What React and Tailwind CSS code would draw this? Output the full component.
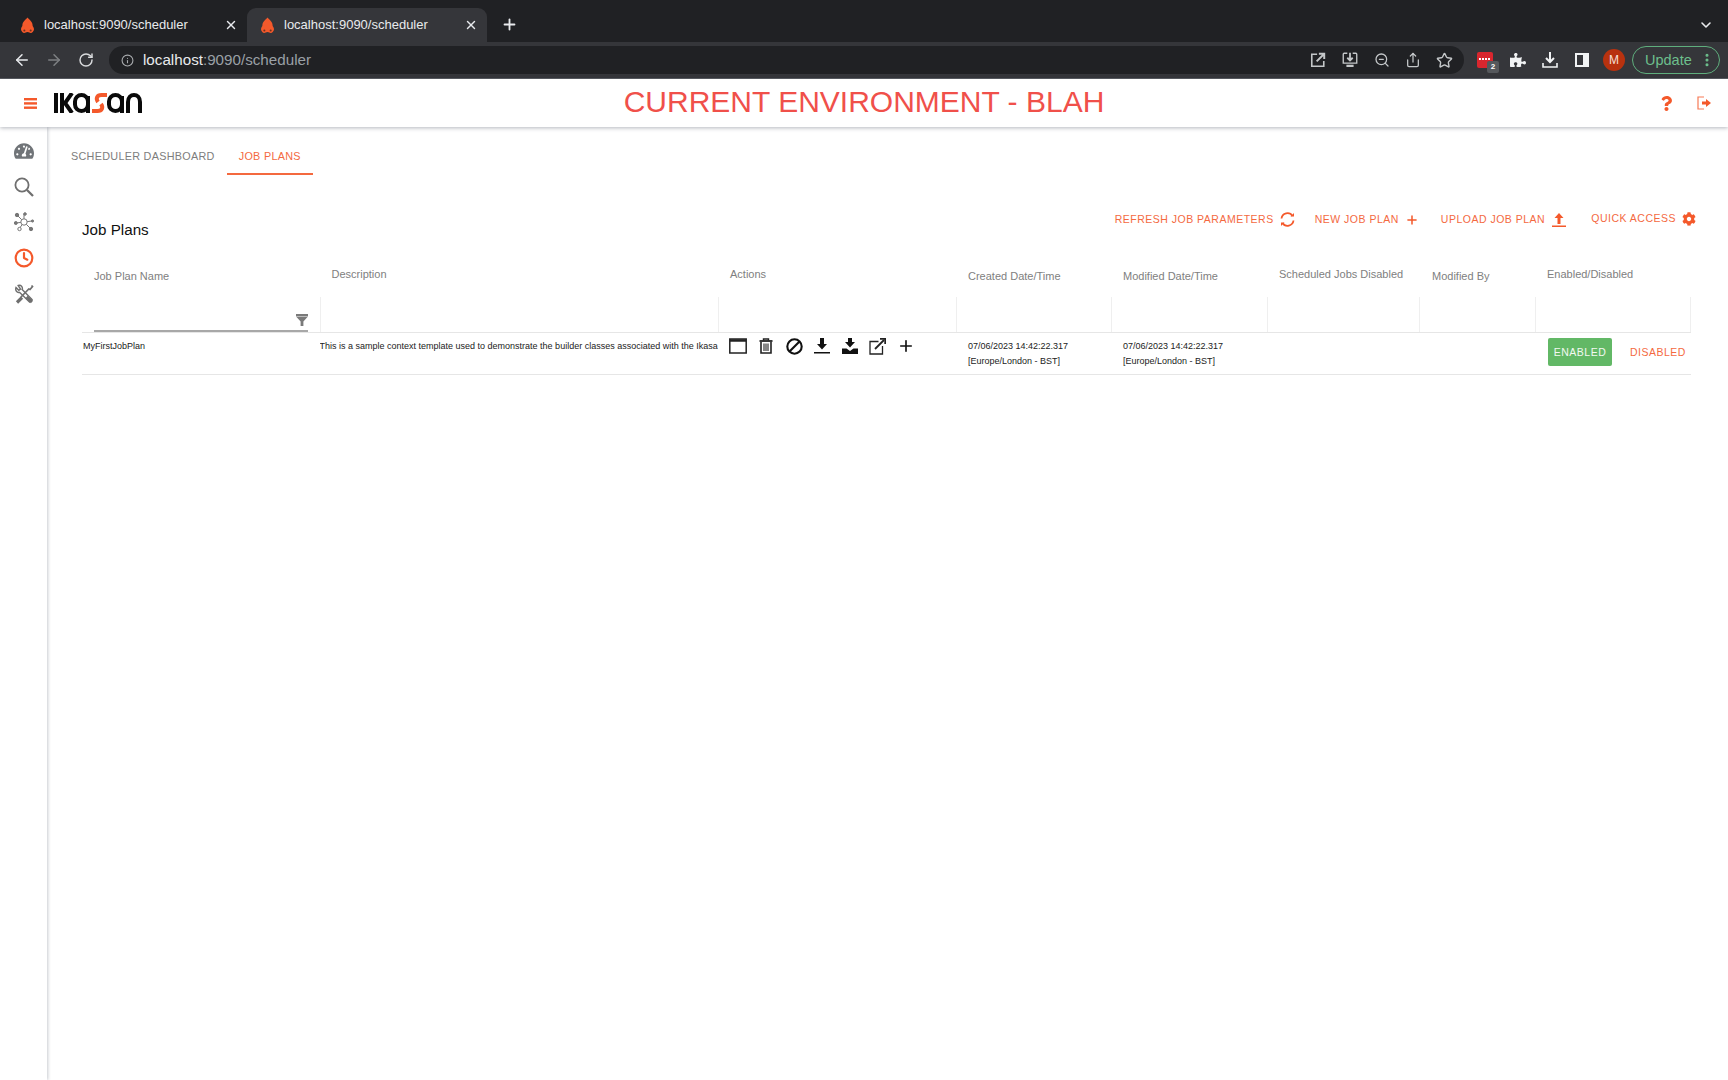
import React from "react";
import { ArrowLeft, ArrowRight, RotateCw, Info, X, Plus, ChevronDown, ZoomOut, Share, Star, Clock, EllipsisVertical } from "lucide-react";
import { FaTachometerAlt, FaCog, FaQuestion, FaPuzzlePiece } from "react-icons/fa";

const ORANGE = "#f4592b";

function Favicon() {
  return (
    <svg width="13" height="17" viewBox="0 0 14 17" className="shrink-0">
      <path d="M7 0 C8.500 2 12.500 4.500 12.500 8.500 C12.500 9.500 14 10.500 14 12.500 C14 14.500 12 16.500 10.500 16.500 C9 16.500 9 15.500 7 15.500 C5 15.500 5 16.500 3.500 16.500 C2 16.500 0 14.500 0 12.500 C0 10.500 1.500 9.500 1.500 8.500 C1.500 4.500 5.500 2 7 0 Z" fill="#f4592b" />
      <circle cx="3.600" cy="13.800" r="1.100" fill="#6a3120" />
      <circle cx="10.400" cy="13.800" r="1.100" fill="#6a3120" />
    </svg>
  );
}

function BrowserTab({ active }) {
  return (
    <div className={"flex h-[34px] w-[240px] items-center rounded-t-[9px] pl-[14px] pr-[9px] " + (active ? "bg-[#35363a]" : "")}>
      <Favicon />
      <span className="ml-[10px] flex-1 text-[13px] text-[#e8eaed]">localhost:9090/scheduler</span>
      <X size={14} strokeWidth={2.4} color="#e8eaed" />
    </div>
  );
}

function InstallIcon() {
  return (
    <svg width="18" height="18" viewBox="0 0 20 20" fill="none" stroke="#c4c7c9" strokeWidth="1.500">
      <path d="M7 2.500H3.500a1 1 0 0 0-1 1v10h15v-10a1 1 0 0 0-1-1H13" />
      <path d="M10 2v8M7 7.500l3 3 3-3" strokeWidth="2" />
      <path d="M6 16.500h8" strokeWidth="2.500" />
    </svg>
  );
}

function ExternalGrey() {
  return (
    <svg width="16" height="16" viewBox="0 0 18 18" fill="none" stroke="#c4c7c9" strokeWidth="1.800">
      <path d="M8 2.500H2v13.500h13.500V10" />
      <path d="M7.500 10.500L15.500 2.500M10 2h6v6" strokeWidth="2.200" />
    </svg>
  );
}

function ChromeBar() {
  return (
    <div className="shrink-0">
      <div className="flex h-[42px] items-end bg-[#202124] pl-[7px]">
        <BrowserTab />
        <BrowserTab active />
        <div className="mb-[8px] ml-[14px] flex h-[20px] items-center">
          <Plus size={17} strokeWidth={2.600} color="#e8eaed" />
        </div>
        <div className="mb-[7px] ml-auto mr-[14px] flex h-[20px] items-center">
          <ChevronDown size={16} strokeWidth={2.400} color="#e8eaed" />
        </div>
      </div>
      <div className="flex h-[37px] items-center border-b border-[#5a5c61] bg-[#35363a] pl-[13px]">
        <ArrowLeft size={18} strokeWidth={2} color="#e8eaed" />
        <ArrowRight size={18} strokeWidth={2} color="#7e8083" className="ml-[14px]" />
        <RotateCw size={16} strokeWidth={2.200} color="#d8dadc" className="ml-[15px]" />
        <div className="ml-[15px] flex h-[28px] w-[1355px] items-center rounded-full bg-[#202124] pl-[12px]">
          <Info size={13} strokeWidth={2} color="#a9acaf" />
          <span className="ml-[9px] pt-px text-[15.200px] text-[#e8eaed]">localhost<span className="text-[#9aa0a6]">:9090/scheduler</span></span>
          <div className="ml-auto flex items-center gap-[15px] pr-[11px]">
            <ExternalGrey />
            <InstallIcon />
            <ZoomOut size={16} strokeWidth={1.900} color="#c4c7c9" />
            <Share size={16} strokeWidth={1.900} color="#c4c7c9" />
            <Star size={17} strokeWidth={2} color="#c4c7c9" />
          </div>
        </div>
        <div className="relative ml-[13px] h-[16px] w-[16px] rounded-[2px] bg-[#d9262e]">
          <div className="mx-[2px] mt-[6px] flex gap-[1px]">
            <i className="h-[2px] w-[2px] bg-white" /><i className="h-[2px] w-[2px] bg-white" /><i className="h-[2px] w-[2px] bg-white" /><i className="h-[2px] w-[2px] bg-white" />
          </div>
          <span className="absolute left-[10px] top-[9px] flex h-[12px] w-[12px] items-center justify-center rounded-[2px] bg-[#55585c] text-[8px] font-bold text-white">2</span>
        </div>
        <FaPuzzlePiece size={16} color="#f1f3f4" className="ml-[17px]" />
        <svg width="18" height="18" viewBox="0 0 18 18" fill="none" stroke="#f1f3f4" strokeWidth="2" className="ml-[15px]">
          <path d="M9 1v10M5 7l4 4 4-4" />
          <path d="M2 12v4h14v-4" strokeWidth="1.600" />
        </svg>
        <div className="ml-[16px] h-[14px] w-[14px] border-[2px] border-r-[6px] border-[#f1f3f4]" />
        <div className="ml-[14px] flex h-[22px] w-[22px] items-center justify-center rounded-full bg-[#b8320f] text-[12px] text-[#f6e1d8]">M</div>
        <div className="ml-[7px] flex h-[28px] w-[88px] items-center rounded-full border border-[#5fae7d] pl-[12px] text-[14.500px] text-[#6dbf8d]">
          <span className="pt-[2px]">Update</span>
          <EllipsisVertical size={16} strokeWidth={2.600} color="#6dbf8d" className="ml-[7px]" />
        </div>
      </div>
    </div>
  );
}

function Logo() {
  return (
    <svg width="88" height="20" viewBox="0 0 88 20" fill="none" stroke="#0a0a0a" strokeWidth="4" className="ml-[17px]">
      <path d="M2 0V20M8 0V20M18 0L11 10L18 20" />
      <rect x="21" y="2" width="13" height="16" rx="6.500" />
      <path d="M34 3V20" />
      <path d="M53 2H47.500C43 2 41.500 5.500 44 9" stroke="#f4592b" />
      <path d="M38 18H43.500C48 18 49.500 14.500 47 11" stroke="#f4592b" />
      <rect x="55" y="2" width="13" height="16" rx="6.500" />
      <path d="M68 3V20" />
      <path d="M74 20V9C74 4 77 2 80 2C83 2 86 4 86 9V20" />
    </svg>
  );
}

function Hamburger() {
  return (
    <svg width="13" height="11" viewBox="0 0 13 11" fill="#f4592b">
      <rect width="13" height="2.400" /><rect y="4.200" width="13" height="2.400" /><rect y="8.500" width="13" height="2.400" />
    </svg>
  );
}

function AppHeader() {
  return (
    <header className="relative z-20 grid h-[48px] shrink-0 grid-cols-[1fr_auto_1fr] items-center bg-white shadow-[0_1px_4px_rgba(40,50,70,0.35)]">
      <div className="flex items-center pl-[24px]">
        <Hamburger />
        <Logo />
      </div>
      <div className="pb-[2px] text-[30px] leading-none text-[#f0504a]">CURRENT ENVIRONMENT - BLAH</div>
      <div className="flex items-center justify-end gap-[23px] pr-[17px]">
        <FaQuestion size={15} color={ORANGE} />
        <svg width="14" height="14" viewBox="0 0 14 14" fill="none">
          <path d="M7 1H1v12h6" stroke="#f4592b" strokeWidth="1.200" opacity="0.800" />
          <path d="M5 5.500h4V3l5 4-5 4V8.500H5z" fill="#f4592b" />
        </svg>
      </div>
    </header>
  );
}

function HubIcon() {
  return (
    <svg width="20" height="20" viewBox="0 0 20 20" fill="#777" stroke="#777" strokeWidth="1">
      <path d="M3 3L10 10M10 10V2M10 10L18 9M10 10L17 17M10 10L5 17M10 10L2 11" />
      <circle cx="3" cy="3" r="1.700" />
      <circle cx="11" cy="2" r="1.300" />
      <circle cx="18.500" cy="9" r="1.100" />
      <circle cx="17" cy="17" r="1.700" />
      <circle cx="5.500" cy="17" r="1.700" fill="#fff" />
      <circle cx="1.800" cy="11" r="1.500" />
      <circle cx="10" cy="10" r="3.200" fill="#fff" />
    </svg>
  );
}

function SearchIcon() {
  return (
    <svg width="20" height="20" viewBox="0 0 20 20" fill="none" stroke="#6f6f6f" strokeWidth="1.800">
      <circle cx="8" cy="8" r="6.600" />
      <path d="M13 13L19 19" strokeWidth="2.300" />
    </svg>
  );
}

function ToolsIcon() {
  return (
    <svg width="20" height="20" viewBox="0 0 20 20" fill="none" stroke="#6f6f6f" strokeWidth="1.400" className="mt-[1px]">
      <path d="M2 3.500L4.800 6.300L6.500 5L4.200 1.500C7 0.500 9 3 8.200 5.500L18 15.500L15.500 18L5.500 8.300C3 9 1 6.500 2 3.500Z" fill="#fff" />
      <path d="M12.500 13L18 18" stroke="#6f6f6f" strokeWidth="3.200" />
      <path d="M17.500 1.500L18.500 2.500L16 5.500L14.800 5L7 13" strokeWidth="1.700" />
      <path d="M8 13.500L3 18.500" strokeWidth="3.200" />
    </svg>
  );
}

function Sidebar() {
  return (
    <aside className="relative z-10 flex w-[47px] shrink-0 flex-col items-center gap-[15.500px] bg-white pt-[14px] shadow-[1px_0_3px_rgba(40,50,70,0.25)]">
      <FaTachometerAlt size={20} color="#707478" />
      <SearchIcon />
      <HubIcon />
      <Clock size={20} strokeWidth={2.600} color={ORANGE} />
      <ToolsIcon />
    </aside>
  );
}

function TabBar() {
  return (
    <div className="flex h-[48px] items-stretch text-[10.800px] tracking-[0.300px]">
      <div className="flex items-center px-[12px] pt-[10px] text-[#7d7d7d]">SCHEDULER DASHBOARD</div>
      <div className="flex items-center border-b-2 border-[#f4693f] px-[12px] pt-[12px] text-[#f4693f]">JOB PLANS</div>
    </div>
  );
}

function RefreshIcon() {
  return (
    <svg width="15" height="15" viewBox="0 0 15 15" fill="none" stroke="#f4592b" strokeWidth="1.800">
      <path d="M1.500 6.500A6 6 0 0 1 12.500 4M13.500 8.500A6 6 0 0 1 2.500 11" />
      <path d="M10.500 4.500h3.500V1z" fill="#f4592b" stroke="none" />
      <path d="M4.500 10.500H1v3.500z" fill="#f4592b" stroke="none" />
    </svg>
  );
}

function ActionLink({ children, icon, className = "" }) {
  return (
    <div className={"flex items-center text-[10.500px] tracking-[0.500px] text-[#f4693f] " + className}>
      {children}
      {icon}
    </div>
  );
}

function PageBar() {
  return (
    <div className="mt-[32px] flex h-[43px] items-start pl-[23px] pr-[32px]">
      <h1 className="mt-[14px] text-[15.200px] leading-[18px] text-[#111]">Job Plans</h1>
      <div className="ml-auto mt-[5px] flex items-center">
        <ActionLink icon={<span className="ml-[6px]"><RefreshIcon /></span>}>REFRESH JOB PARAMETERS</ActionLink>
        <ActionLink className="ml-[20px]" icon={<Plus size={14} strokeWidth={2.600} color={ORANGE} className="ml-[6px]" />}>NEW JOB PLAN</ActionLink>
        <ActionLink className="ml-[22px]" icon={
          <svg width="14" height="14" viewBox="0 0 14 14" fill="#f4592b" className="ml-[7px]">
            <path d="M7 0L11.500 5H8.500V11H5.500V5H2.500Z" /><rect y="12.500" width="14" height="1.500" />
          </svg>}>UPLOAD JOB PLAN</ActionLink>
        <ActionLink className="ml-[25px] -mt-[2px]" icon={<FaCog size={14} color={ORANGE} className="ml-[6px]" />}>QUICK ACCESS</ActionLink>
      </div>
    </div>
  );
}

const COLS = "grid grid-cols-[237.500px_398.500px_238px_155px_156px_152px_116px_156px]";

function Head({ children, low, pad = "pl-[12px]" }) {
  return <div className={pad + " text-[11px] leading-[14px] text-[#808080] " + (low ? "pt-[19px]" : "pt-[17px]")}>{children}</div>;
}

function WindowIcon() {
  return (
    <svg width="18" height="16" viewBox="0 0 18 16" fill="none" stroke="#222" strokeWidth="1.500">
      <rect x="0.800" y="1" width="16.400" height="14" />
      <path d="M1 2.500H17" strokeWidth="2.500" />
    </svg>
  );
}

function TrashIcon() {
  return (
    <svg width="14" height="16" viewBox="0 0 14 16" fill="none" stroke="#222" strokeWidth="1.600">
      <path d="M0.500 3H13.500" strokeWidth="1.800" />
      <path d="M4.500 2.500V1H9.500V2.500" strokeWidth="1.400" />
      <path d="M2 4V15H12V4" />
      <path d="M5 5.500V13M7 5.500V13M9 5.500V13" strokeWidth="1.100" />
    </svg>
  );
}

function BanIcon() {
  return (
    <svg width="17" height="17" viewBox="0 0 17 17" fill="none" stroke="#111" strokeWidth="2.100">
      <circle cx="8.500" cy="8.500" r="7.200" />
      <path d="M3.500 13.500L13.500 3.500" />
    </svg>
  );
}

function DownIcon() {
  return (
    <svg width="16" height="16" viewBox="0 0 16 16" fill="#111">
      <path d="M6 0H10V6H13L8 11.500L3 6H6Z" /><rect y="14" width="16" height="1.500" />
    </svg>
  );
}

function TrayIcon() {
  return (
    <svg width="16" height="16" viewBox="0 0 16 16" fill="#111">
      <path d="M6 0H10V4H13L8 9.500L3 4H6Z" />
      <path d="M0 10.500H4.500L8 13L11.500 10.500H16V16H0Z" />
    </svg>
  );
}

function ExternalIcon() {
  return (
    <svg width="17" height="17" viewBox="0 0 17 17" fill="none" stroke="#222" strokeWidth="1.300">
      <path d="M9.500 3.500H1V16H13.500V8" />
      <path d="M6 11L15 2" strokeWidth="1.800" />
      <path d="M11 0.800H16.200V6" strokeWidth="1.800" />
    </svg>
  );
}

function FunnelIcon() {
  return (
    <svg width="12" height="12" viewBox="0 0 12 12" fill="#7a7a7a">
      <rect width="12" height="2.500" />
      <path d="M0.500 3H11.500L7.400 7.500V12H4.600V7.500Z" />
    </svg>
  );
}

function ActionsRow() {
  return (
    <div className="flex h-[26px] items-center pl-[11px]">
      <span className="flex w-[18px] justify-center"><WindowIcon /></span>
      <span className="ml-[10px] flex w-[18px] justify-center"><TrashIcon /></span>
      <span className="ml-[10px] flex w-[18px] justify-center"><BanIcon /></span>
      <span className="ml-[10px] flex w-[18px] justify-center"><DownIcon /></span>
      <span className="ml-[10px] flex w-[18px] justify-center"><TrayIcon /></span>
      <span className="ml-[9px] flex w-[18px] justify-center"><ExternalIcon /></span>
      <span className="ml-[11px] flex w-[18px] justify-center"><Plus size={18} strokeWidth={2.200} color="#111" /></span>
    </div>
  );
}

function DateCell() {
  return (
    <div className="pl-[12px] pt-[6px] text-[9px] leading-[14.500px] text-[#222]">
      <div>07/06/2023 14:42:22.317</div>
      <div>[Europe/London - BST]</div>
    </div>
  );
}

function JobTable() {
  const filterCell = "border-l border-[#efefef]";
  return (
    <div className="ml-[35px] w-[1609px]">
      <div className={COLS + " h-[47px]"}>
        <Head low>Job Plan Name</Head>
        <Head>Description</Head>
        <Head>Actions</Head>
        <Head low>Created Date/Time</Head>
        <Head low>Modified Date/Time</Head>
        <Head>Scheduled Jobs Disabled</Head>
        <Head low pad="pl-[13px]">Modified By</Head>
        <Head pad="pl-[12px]">Enabled/Disabled</Head>
      </div>
      <div className={COLS + " h-[36px] border-b border-[#e6e6e6]"}>
        <div className="flex items-end pl-[12px] pr-[12px]">
          <div className="flex h-full w-full items-end justify-end border-b-2 border-[#a8a8a8] pb-[4px]">
            <FunnelIcon />
          </div>
        </div>
        <div className={filterCell} />
        <div className={filterCell} />
        <div className={filterCell} />
        <div className={filterCell} />
        <div className={filterCell} />
        <div className={filterCell} />
        <div className={filterCell + " border-r"} />
      </div>
      <div className={COLS + " h-[42px] border-b border-[#e6e6e6]"}>
        <div className="pl-px pt-[6px] text-[9px] leading-[15px] text-[#222]">MyFirstJobPlan</div>
        <div className="overflow-hidden whitespace-nowrap pt-[6px] text-[9px] leading-[15px] text-[#222]">This is a sample context template used to demonstrate the builder classes associated with the Ikasa</div>
        <ActionsRow />
        <DateCell />
        <DateCell />
        <div />
        <div />
        <div className="flex items-start pl-[13px] pt-[5px]">
          <div className="flex h-[28px] w-[64px] items-center justify-center rounded-[2px] bg-[#62b866] pt-px text-[10.500px] tracking-[0.500px] text-[#f2f8f2]">ENABLED</div>
          <div className="ml-[18px] flex h-[28px] items-center pt-px text-[10.500px] tracking-[0.500px] text-[#f4693f]">DISABLED</div>
        </div>
      </div>
    </div>
  );
}

export default function App() {
  return (
    <div className="flex h-screen w-full flex-col overflow-hidden bg-white font-['Liberation_Sans',Arial,sans-serif]">
      <ChromeBar />
      <AppHeader />
      <div className="flex min-h-0 flex-1">
        <Sidebar />
        <main className="min-w-0 flex-1">
          <div className="pl-[12px]"><TabBar /></div>
          <div className="pl-[12px]"><PageBar /></div>
          <JobTable />
        </main>
      </div>
    </div>
  );
}
